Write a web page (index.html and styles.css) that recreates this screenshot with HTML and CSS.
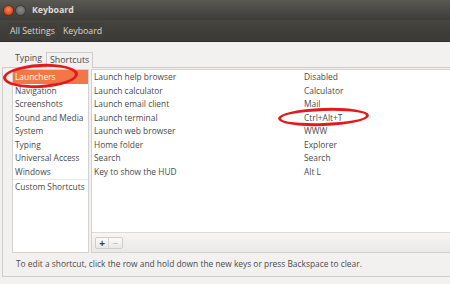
FILE: index.html
```html
<!DOCTYPE html>
<html>
<head>
<meta charset="utf-8">
<link rel="stylesheet" href="styles.css">
</head>
<body>
<div class="window">
  <div class="titlebar">
    <span class="wbtn close"></span>
    <span class="wbtn min"></span>
    <span class="title">Keyboard</span>
  </div>
  <div class="toolbar">
    <span class="tbtn">All Settings</span>
    <span class="tbtn">Keyboard</span>
  </div>
  <div class="content">
    <div class="tabs">
      <span class="tab">Typing</span>
      <span class="tab active">Shortcuts</span>
    </div>
    <div class="notebook">
      <div class="panes">
        <div class="cats">
          <div class="row sel">Launchers</div>
          <div class="row">Navigation</div>
          <div class="row">Screenshots</div>
          <div class="row">Sound and Media</div>
          <div class="row">System</div>
          <div class="row">Typing</div>
          <div class="row">Universal Access</div>
          <div class="row">Windows</div>
          <div class="row custom">Custom Shortcuts</div>
        </div>
        <div class="right">
          <div class="keys">
            <div class="krow"><span class="name">Launch help browser</span><span class="acc">Disabled</span></div>
            <div class="krow"><span class="name">Launch calculator</span><span class="acc">Calculator</span></div>
            <div class="krow"><span class="name">Launch email client</span><span class="acc">Mail</span></div>
            <div class="krow"><span class="name">Launch terminal</span><span class="acc">Ctrl+Alt+T</span></div>
            <div class="krow"><span class="name">Launch web browser</span><span class="acc">WWW</span></div>
            <div class="krow"><span class="name">Home folder</span><span class="acc">Explorer</span></div>
            <div class="krow"><span class="name">Search</span><span class="acc">Search</span></div>
            <div class="krow"><span class="name">Key to show the HUD</span><span class="acc">Alt L</span></div>
          </div>
          <div class="listbar">
            <span class="pm"><span class="plus">+</span><span class="minus">−</span></span>
          </div>
        </div>
      </div>
      <div class="hint">To edit a shortcut, click the row and hold down the new keys or press Backspace to clear.</div>
    </div>
  </div>
  <div class="mark mark1"></div>
  <div class="mark mark2"></div>
</div>
</body>
</html>
```
FILE: styles.css
```css
* { box-sizing: border-box; }
html, body { margin: 0; padding: 0; }
body {
  width: 450px;
  height: 284px;
  overflow: hidden;
  font-family: "Open Sans", "DejaVu Sans", sans-serif;
  font-size: 8.4px;
  color: #4a4a4a;
}
.window {
  position: relative;
  width: 450px;
  height: 284px;
  background: #f2f1f0;
  display: flex;
  flex-direction: column;
}
.titlebar {
  height: 20px;
  flex: none;
  background: linear-gradient(#5a5853, #3d3c38);
  display: flex;
  align-items: center;
  padding-left: 3px;
}
.wbtn {
  width: 11px;
  height: 11px;
  border-radius: 50%;
  margin-right: 1px;
}
.close {
  background: radial-gradient(circle at 50% 40%, #f58a5f, #e1461c 70%);
  border: 1px solid #6b2a16;
}
.min {
  background: radial-gradient(circle at 50% 40%, #8d8b85, #6b6964 70%);
  border: 1px solid #3a3935;
}
.title {
  margin-left: 5px;
  font-weight: bold;
  color: #dfdbd2;
  font-size: 8.8px;
}
.toolbar {
  height: 22px;
  flex: none;
  background: linear-gradient(#46453f, #3a3935);
  display: flex;
  align-items: center;
  padding-left: 8px;
  gap: 4px;
  border-bottom: 1px solid #2e2d29;
}
.tbtn {
  color: #dcd8cf;
  font-size: 8.8px;
  padding: 2px 2px;
  background: #403f3a;
  border-radius: 2px;
}
.content {
  flex: 1;
  display: flex;
  flex-direction: column;
  padding: 0 0 7px 2px;
}
.tabs {
  height: 25px;
  display: flex;
  align-items: flex-end;
  padding-left: 11px;
}
.tab {
  height: 16px;
  line-height: 15px;
  padding: 0 4px 0 2px;
  color: #4a4a4a;
  font-size: 8.8px;
}
.tab.active {
  border: 1px solid #cfcdc9;
  border-bottom: none;
  background: #f2f1f0;
  padding: 0 3px;
  position: relative;
  top: 1px;
}
.notebook {
  flex: 1;
  border: 1px solid #cfcdc9;
  border-right: none;
  display: flex;
  flex-direction: column;
  padding: 1px 0 0 9px;
}
.panes {
  height: 184px;
  display: flex;
  gap: 2px;
}
.cats {
  width: 77px;
  background: #fff;
  border: 1px solid #d4d2ce;
}
.row {
  height: 13.5px;
  line-height: 13.5px;
  padding-left: 2px;
  white-space: nowrap;
}
.row.sel {
  background: #f07746;
  color: #fff;
}
.row.custom {
  border-top: 1px solid #e9e8e6;
  margin-top: 1px;
  height: 14px;
  line-height: 14px;
}
.right {
  flex: 1;
  display: flex;
  flex-direction: column;
  border: 1px solid #d4d2ce;
  border-right: none;
}
.keys {
  flex: 1;
  background: #fff;
}
.krow {
  display: flex;
  height: 13.5px;
  line-height: 13.5px;
  padding-left: 2px;
  white-space: nowrap;
}
.name { width: 210px; }
.listbar {
  height: 20px;
  flex: none;
  border-top: 1px solid #dcdad6;
  background: linear-gradient(#f7f6f5, #eae9e7);
  display: flex;
  align-items: center;
  padding-left: 3px;
}
.pm {
  display: flex;
  border: 1px solid #cfcdc9;
  border-radius: 2px;
  background: linear-gradient(#fbfbfa, #e9e8e6);
  height: 12px;
}
.plus, .minus {
  width: 13px;
  text-align: center;
  line-height: 11px;
  font-size: 10px;
  font-weight: bold;
}
.plus { color: #3c3c3c; border-right: 1px solid #d8d6d2; }
.minus { color: #b8b6b2; font-weight: normal; }
.hint {
  height: 22px;
  line-height: 21px;
  padding-left: 4px;
  white-space: nowrap;
}
.mark {
  position: absolute;
  border: 3px solid #e4191c;
  border-radius: 50%;
}
.mark1 {
  left: 3px;
  top: 64px;
  width: 75px;
  height: 24px;
  transform: rotate(-3deg);
}
.mark2 {
  left: 278px;
  top: 108px;
  width: 91px;
  height: 18px;
  transform: rotate(-2deg);
}
```
